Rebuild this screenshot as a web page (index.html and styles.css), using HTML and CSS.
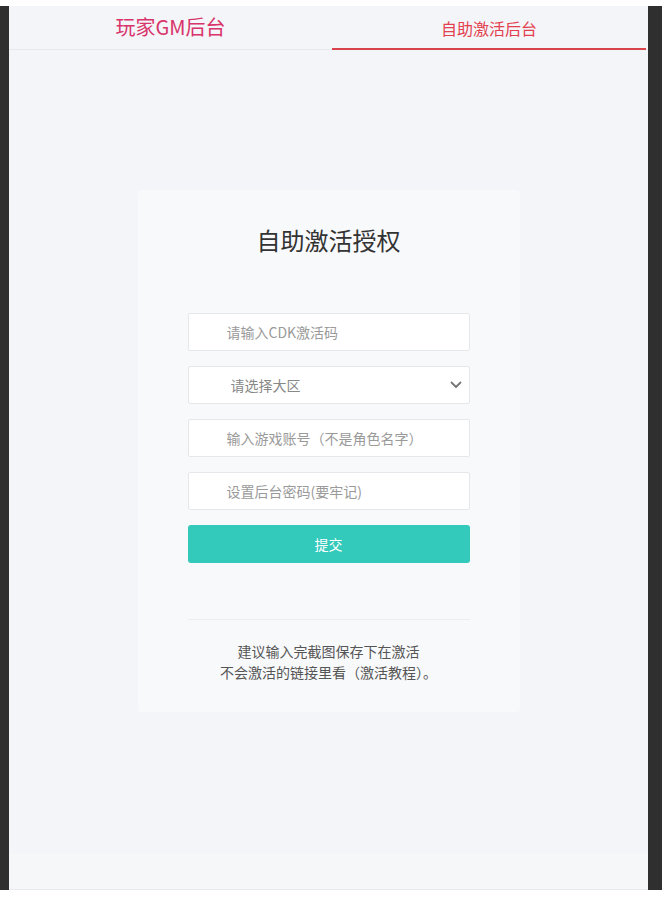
FILE: index.html
```html
<!DOCTYPE html>
<html lang="zh-CN">
<head>
<meta charset="utf-8">
<title>自助激活授权</title>
<link rel="stylesheet" href="styles.css">
</head>
<body>
<div class="frame">
  <div class="app">
    <nav class="tabs">
      <a class="tab tab-gm">玩家GM后台</a>
      <a class="tab tab-active">自助激活后台</a>
    </nav>
    <main class="main">
      <section class="card">
        <h1 class="title">自助激活授权</h1>
        <form class="form">
          <input class="field" type="text" placeholder="请输入CDK激活码">
          <div class="select-wrap">
            <select class="field field-select">
              <option>请选择大区</option>
            </select>
            <svg class="chevron" width="12" height="8" viewBox="0 0 12 8"><path d="M1.5 1.5 L6 6 L10.5 1.5" fill="none" stroke="#777" stroke-width="1.8" stroke-linecap="round" stroke-linejoin="round"/></svg>
          </div>
          <input class="field" type="text" placeholder="输入游戏账号（不是角色名字）">
          <input class="field" type="password" placeholder="设置后台密码(要牢记)">
          <button class="submit" type="button">提交</button>
        </form>
        <div class="divider"></div>
        <p class="note">建议输入完截图保存下在激活<br>不会激活的链接里看（激活教程）。</p>
      </section>
    </main>
    <footer class="footer"></footer>
  </div>
</div>
</body>
</html>
```

FILE: styles.css
```css
* { box-sizing: border-box; }
html, body { margin: 0; padding: 0; background: #ffffff; }
body {
  font-family: "Noto Sans CJK SC", "Noto Sans", "Liberation Sans", sans-serif;
  color: #333;
}
.frame {
  margin-top: 6px;
  height: 884px;
  background: #2f2f2f;
  padding: 0 14px 0 9px;
}
.app {
  height: 100%;
  background: #f4f5f8;
  display: flex;
  flex-direction: column;
}
.tabs {
  display: flex;
  height: 44px;
  border-bottom: 1px solid #e7e8ec;
  padding-right: 2px;
}
.tab {
  display: flex;
  align-items: center;
  justify-content: center;
  text-decoration: none;
  cursor: pointer;
}
.tab-gm {
  width: 323px;
  font-size: 20px;
  color: #d8336a;
  padding-bottom: 2px;
}
.tab-active {
  flex: 1;
  font-size: 16px;
  color: #e2404e;
  border-bottom: 2px solid #d9434c;
  margin-bottom: -1px;
  padding-top: 2px;
}
.main {
  flex: 1;
  padding-top: 140px;
}
.card {
  width: 382px;
  height: 522px;
  margin: 0 auto;
  background: #f8f9fb;
  border-radius: 4px;
  padding-top: 33px;
  display: flex;
  flex-direction: column;
  align-items: center;
}
.title {
  margin: 0;
  font-size: 24px;
  line-height: 34px;
  font-weight: normal;
  color: #333;
}
.form {
  margin-top: 56px;
  width: 282px;
  display: flex;
  flex-direction: column;
  gap: 15px;
}
.field {
  width: 100%;
  height: 38px;
  border: 1px solid #e5e7ea;
  border-radius: 2px;
  background: #fff;
  padding: 0 10px 0 38px;
  font-family: inherit;
  font-size: 14px;
  color: #333;
  outline: none;
}
.field::placeholder { color: #9a9a9a; }
.select-wrap { position: relative; }
.field-select {
  appearance: none;
  -webkit-appearance: none;
  padding-left: 42px;
  color: #888;
}
.chevron {
  position: absolute;
  right: 8px;
  top: 15px;
  pointer-events: none;
}
.submit {
  height: 38px;
  border: none;
  border-radius: 3px;
  background: #33c9bb;
  color: #fff;
  font-family: inherit;
  font-size: 14px;
  cursor: pointer;
}
.divider {
  margin-top: 56px;
  width: 282px;
  height: 1px;
  background: #eceef1;
}
.note {
  margin: 21px 0 0;
  font-size: 14px;
  line-height: 21px;
  color: #555;
  text-align: center;
}
.footer {
  height: 37px;
  background: #f6f7f9;
  border-bottom: 1px solid #e8eaee;
}
```
